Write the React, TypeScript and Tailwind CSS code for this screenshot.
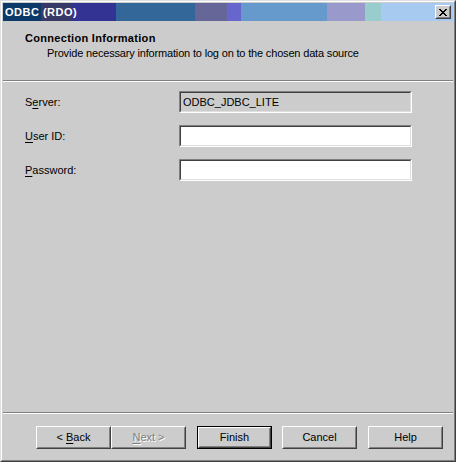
import React from 'react';

const bands = [
  { w: 'w-[38px]', c: 'bg-[#0b3a6a]' },
  { w: 'w-[31px]', c: 'bg-[#393968]' },
  { w: 'w-[44px]', c: 'bg-[#333393]' },
  { w: 'w-[79px]', c: 'bg-[#336699]' },
  { w: 'w-[32px]', c: 'bg-[#666699]' },
  { w: 'w-[14px]', c: 'bg-[#6666cc]' },
  { w: 'w-[86px]', c: 'bg-[#6699cc]' },
  { w: 'w-[38px]', c: 'bg-[#9999cc]' },
  { w: 'w-[16px]', c: 'bg-[#99cccc]' },
  { w: 'flex-1', c: 'bg-[#a6caf0]' },
];

function Key({ children }: { children: React.ReactNode }) {
  return <span className="underline underline-offset-[2px]">{children}</span>;
}

function Field({ value, disabled }: { value?: string; disabled?: boolean }) {
  return (
    <div className="w-[233px] h-[22px] border border-t-[#808080] border-l-[#808080] border-r-white border-b-white">
      <div
        className={`h-full border border-t-[#404040] border-l-[#404040] border-r-[#dfdfdf] border-b-[#dfdfdf] pl-[2px] leading-[18px] ${
          disabled ? 'bg-[#cccccc]' : 'bg-white'
        }`}
      >
        {value}
      </div>
    </div>
  );
}

function Button({
  children,
  primary,
  disabled,
  className = '',
}: {
  children: React.ReactNode;
  primary?: boolean;
  disabled?: boolean;
  className?: string;
}) {
  const face = (
    <div className="h-full border border-t-white border-l-white border-r-[#404040] border-b-[#404040]">
      <div
        className={`h-full flex items-center justify-center border border-t-transparent border-l-transparent border-r-[#808080] border-b-[#808080] ${
          disabled ? 'text-[#808080] [text-shadow:1px_1px_0_#ffffff]' : 'text-black'
        }`}
      >
        {children}
      </div>
    </div>
  );
  return (
    <div className={`w-[75px] h-[23px] ${primary ? 'border border-black' : ''} ${className}`}>{face}</div>
  );
}

export default function App() {
  return (
    <div
      className="w-[456px] h-[462px] border border-t-[#dfdfdf] border-l-[#dfdfdf] border-r-[#404040] border-b-[#404040] text-[11px] text-black"
      style={{ fontFamily: '"Liberation Sans", Arial, sans-serif' }}
    >
      <div className="h-full border border-t-white border-l-white border-r-[#808080] border-b-[#808080] bg-[#cccccc] p-px flex flex-col">
        {/* title bar */}
        <div className="relative h-[18px] shrink-0">
          <div className="absolute inset-0 flex">
            {bands.map((b, i) => (
              <div key={i} className={`${b.w} ${b.c}`} />
            ))}
          </div>
          <div className="absolute left-[2px] top-0 h-[18px] leading-[18px] font-bold text-white tracking-[0.5px]">
            ODBC (RDO)
          </div>
          <div className="absolute right-[2px] top-[2px] w-[16px] h-[14px] bg-[#cccccc] border border-t-white border-l-white border-r-[#404040] border-b-[#404040]">
            <div className="h-full border border-t-transparent border-l-transparent border-r-[#808080] border-b-[#808080] flex items-center justify-center">
              <svg width="8" height="7" viewBox="0 0 8 7" shapeRendering="crispEdges">
                <path
                  d="M0 0h2v1h-2zM6 0h2v1h-2zM1 1h2v1h-2zM5 1h2v1h-2zM2 2h4v1h-4zM3 3h2v1h-2zM2 4h4v1h-4zM1 5h2v1h-2zM5 5h2v1h-2zM0 6h2v1h-2zM6 6h2v1h-2z"
                  fill="#000"
                />
              </svg>
            </div>
          </div>
        </div>

        {/* header */}
        <div className="h-[59px] shrink-0 pl-[22px] pt-[11px]">
          <div className="font-bold leading-[13px] tracking-[0.3px]">Connection Information</div>
          <div className="pl-[22px] mt-[2px] leading-[13px] tracking-[-0.17px]">
            Provide necessary information to log on to the chosen data source
          </div>
        </div>
        <div className="h-[2px] shrink-0 border-t border-t-[#808080] border-b border-b-white" />

        {/* form */}
        <div className="flex-1 pt-[9px] pl-[22px] flex flex-col gap-[12px]">
          <div className="flex items-center">
            <div className="w-[154px]">
              S<Key>e</Key>rver:
            </div>
            <Field value="ODBC_JDBC_LITE" disabled />
          </div>
          <div className="flex items-center">
            <div className="w-[154px]">
              <Key>U</Key>ser ID:
            </div>
            <Field />
          </div>
          <div className="flex items-center">
            <div className="w-[154px]">
              <Key>P</Key>assword:
            </div>
            <Field />
          </div>
        </div>

        <div className="h-[2px] shrink-0 border-t border-t-[#808080] border-b border-b-white" />

        {/* footer */}
        <div className="h-[45px] shrink-0 pt-[12px] pl-[33px] flex items-start">
          <Button>
            &lt;&nbsp;<Key>B</Key>ack
          </Button>
          <Button disabled>
            <Key>N</Key>ext &gt;
          </Button>
          <Button primary className="ml-[11px]">
            Finish
          </Button>
          <Button className="ml-[10px]">Cancel</Button>
          <Button className="ml-[11px]">Help</Button>
        </div>
      </div>
    </div>
  );
}
